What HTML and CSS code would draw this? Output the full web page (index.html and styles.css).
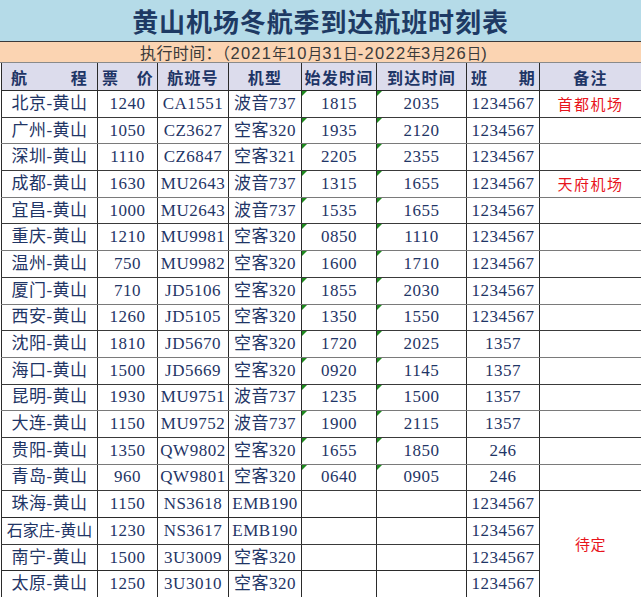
FILE: index.html
```html
<!DOCTYPE html>
<html lang="zh">
<head>
<meta charset="utf-8">
<title>黄山机场冬航季到达航班时刻表</title>
<link rel="stylesheet" href="styles.css">
</head>
<body>
<div class="sheet">
  <div class="title">黄山机场冬航季到达航班时刻表</div>
  <div class="period"><span class="lead">执行时间：（</span><span class="num">2021</span>年<span class="num">10</span>月<span class="num">31</span>日<span class="num">-2022</span>年<span class="num">3</span>月<span class="num">26</span>日<span class="num">)</span></div>
  <table class="grid">
    <colgroup>
      <col class="c1"><col class="c2"><col class="c3"><col class="c4"><col class="c5"><col class="c6"><col class="c7"><col class="c8">
    </colgroup>
    <thead>
      <tr>
        <th><span class="spread"><span>航</span><span>程</span></span></th>
        <th><span class="spread tight"><span>票</span><span>价</span></span></th>
        <th>航班号</th>
        <th>机型</th>
        <th>始发时间</th>
        <th>到达时间</th>
        <th><span class="spread tight"><span>班</span><span>期</span></span></th>
        <th>备注</th>
      </tr>
    </thead>
    <tbody>
      <tr><td>北京-黄山</td><td>1240</td><td>CA1551</td><td>波音737</td><td class="tx">1815</td><td class="tx">2035</td><td>1234567</td><td class="note">首都机场</td></tr>
      <tr><td>广州-黄山</td><td>1050</td><td>CZ3627</td><td>空客320</td><td class="tx">1935</td><td class="tx">2120</td><td>1234567</td><td></td></tr>
      <tr><td>深圳-黄山</td><td>1110</td><td>CZ6847</td><td>空客321</td><td class="tx">2205</td><td class="tx">2355</td><td>1234567</td><td></td></tr>
      <tr><td>成都-黄山</td><td>1630</td><td>MU2643</td><td>波音737</td><td class="tx">1315</td><td class="tx">1655</td><td>1234567</td><td class="note">天府机场</td></tr>
      <tr><td>宜昌-黄山</td><td>1000</td><td>MU2643</td><td>波音737</td><td class="tx">1535</td><td class="tx">1655</td><td>1234567</td><td></td></tr>
      <tr><td>重庆-黄山</td><td>1210</td><td>MU9981</td><td>空客320</td><td class="tx">0850</td><td class="tx">1110</td><td>1234567</td><td></td></tr>
      <tr><td>温州-黄山</td><td>750</td><td>MU9982</td><td>空客320</td><td class="tx">1600</td><td class="tx">1710</td><td>1234567</td><td></td></tr>
      <tr><td>厦门-黄山</td><td>710</td><td>JD5106</td><td>空客320</td><td class="tx">1855</td><td class="tx">2030</td><td>1234567</td><td></td></tr>
      <tr><td>西安-黄山</td><td>1260</td><td>JD5105</td><td>空客320</td><td class="tx">1350</td><td class="tx">1550</td><td>1234567</td><td></td></tr>
      <tr><td>沈阳-黄山</td><td>1810</td><td>JD5670</td><td>空客320</td><td class="tx">1720</td><td class="tx">2025</td><td>1357</td><td></td></tr>
      <tr><td>海口-黄山</td><td>1500</td><td>JD5669</td><td>空客320</td><td class="tx">0920</td><td class="tx">1145</td><td>1357</td><td></td></tr>
      <tr><td>昆明-黄山</td><td>1930</td><td>MU9751</td><td>波音737</td><td class="tx">1235</td><td class="tx">1500</td><td>1357</td><td></td></tr>
      <tr><td>大连-黄山</td><td>1150</td><td>MU9752</td><td>波音737</td><td class="tx">1900</td><td class="tx">2115</td><td>1357</td><td></td></tr>
      <tr><td>贵阳-黄山</td><td>1350</td><td>QW9802</td><td>空客320</td><td class="tx">1655</td><td class="tx">1850</td><td>246</td><td></td></tr>
      <tr><td>青岛-黄山</td><td>960</td><td>QW9801</td><td>空客320</td><td class="tx">0640</td><td class="tx">0905</td><td>246</td><td></td></tr>
      <tr class="dark"><td>珠海-黄山</td><td>1150</td><td>NS3618</td><td>EMB190</td><td></td><td></td><td>1234567</td><td class="note merged" rowspan="4">待定</td></tr>
      <tr class="dark"><td class="narrow">石家庄-黄山</td><td>1230</td><td>NS3617</td><td>EMB190</td><td></td><td></td><td>1234567</td></tr>
      <tr class="dark"><td>南宁-黄山</td><td>1500</td><td>3U3009</td><td>空客320</td><td></td><td></td><td>1234567</td></tr>
      <tr class="dark"><td>太原-黄山</td><td>1250</td><td>3U3010</td><td>空客320</td><td></td><td></td><td>1234567</td></tr>
    </tbody>
  </table>
</div>
</body>
</html>
```

FILE: styles.css
```css
html, body {
  margin: 0;
  padding: 0;
  background: #ffffff;
}

.sheet {
  width: 641px;
  height: 597px;
  overflow: hidden;
  font-family: "Liberation Serif", "Noto Sans CJK SC", serif;
  color: #1f3566;
}

.title {
  height: 41px;
  background: #b5dbe8;
  border-bottom: 1px solid #3a3a3a;
  text-align: center;
  font-family: "Noto Sans CJK SC", sans-serif;
  font-weight: 700;
  font-size: 26px;
  line-height: 41px;
  letter-spacing: 0.9px;
  color: #1e3a64;
}

.period {
  height: 20px;
  background: #fbd4b2;
  border-bottom: 1px solid #8a8a8a;
  padding-left: 140px;
  font-family: "Noto Sans CJK SC", sans-serif;
  font-size: 14.5px;
  line-height: 20px;
  color: #3a3a3a;
  white-space: nowrap;
}

.period .lead {
  font-size: 16px;
  letter-spacing: 0.4px;
}

.period .num {
  font-family: "Liberation Sans", sans-serif;
  font-size: 16.5px;
  letter-spacing: 1.3px;
}

.grid {
  border-collapse: collapse;
  table-layout: fixed;
  width: 640px;
  margin-left: 1px;
}

.c1 { width: 96px; }
.c2 { width: 60px; }
.c3 { width: 71px; }
.c4 { width: 73px; }
.c5 { width: 75px; }
.c6 { width: 90px; }
.c7 { width: 73px; }
.c8 { width: 102px; }

.grid th,
.grid td {
  border-left: 1px solid #2b2b2b;
  border-right: 1px solid #2b2b2b;
  border-bottom: 1px solid #7a7a7a;
  padding: 0;
  text-align: center;
  white-space: nowrap;
  overflow: hidden;
}

.grid th {
  height: 27px;
  background: #dcdcec;
  font-family: "Noto Sans CJK SC", sans-serif;
  font-weight: 700;
  font-size: 16px;
  letter-spacing: 1.2px;
  color: #1e3566;
  border-bottom: 1px solid #2b2b2b;
}

.spread {
  display: flex;
  justify-content: space-between;
  padding: 0 9px 0 9px;
}

.spread.tight {
  padding: 0 3px 0 4px;
}

.grid td {
  height: 25.7px;
  font-size: 17px;
  letter-spacing: 0.5px;
  line-height: 20px;
}

.grid td.narrow {
  letter-spacing: 0;
  font-size: 16px;
}

.grid tbody tr:nth-child(odd) td {
  border-bottom-color: #3a3a3a;
}

.grid tr.dark td {
  border-bottom-color: #2b2b2b;
}

.grid td.tx {
  position: relative;
}

.grid td.tx::before {
  content: "";
  position: absolute;
  left: 0;
  top: 0;
  border-top: 5px solid #1e8a1e;
  border-right: 5px solid transparent;
}

.grid td.note {
  color: #e8141c;
  font-family: "Noto Sans CJK SC", sans-serif;
  font-size: 15px;
  letter-spacing: 1.5px;
}

.grid td.merged {
  vertical-align: middle;
  letter-spacing: 0.5px;
}
```
